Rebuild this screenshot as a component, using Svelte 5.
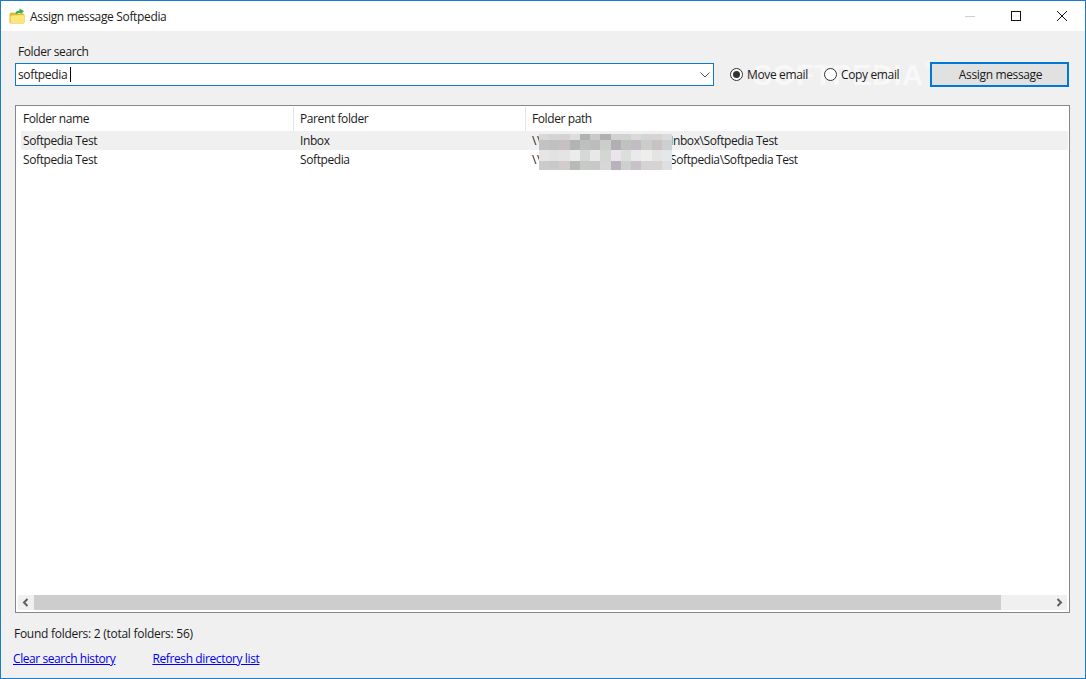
<script>
	const rows = [
		{ name: 'Softpedia Test', parent: 'Inbox', prefix: '\\\\', path: 'Inbox\\Softpedia Test' },
		{ name: 'Softpedia Test', parent: 'Softpedia', prefix: '\\\\', path: 'Softpedia\\Softpedia Test' }
	];

	// censored part of the folder path, one list per band
	const blur = [
		['#d8d8d8', '#d4d4d4', '#d6d2d4', '#e0dcda', '#aeb2b2', '#c8cac8', '#b0b0b0', '#d2d2d0', '#d0d2d2', '#dcdad8', '#d4d4d4', '#d8d4d4', '#d8dcdc'],
		['#c2c2c2', '#c0c0c0', '#c6c0c2', '#b2b4b4', '#bec0be', '#bcbcbc', '#cccecc', '#b2aeb4', '#c0c2c0', '#c2bcc4', '#cccccc', '#c8c2c2', '#ccd0d2'],
		['#e6e6e6', '#e2e2e2', '#e4e4e4', '#ececec', '#d4d8d6', '#e8e8e8', '#d4d6d4', '#e8e6e8', '#dcdedc', '#eaeaec', '#eeeeec', '#e4e4e4', '#e4e8ea'],
		['#cbcbcb', '#c9c9c9', '#d2cccd', '#b8bab8', '#c8cac8', '#c8c8c8', '#d6d8d6', '#b8b2bc', '#ccd0ce', '#c8c2c8', '#d4d4d4', '#d8d2d2', '#dce0e2']
	];
</script>

<div class="window">
	<header class="titlebar">
		<svg class="app-icon" width="16" height="16" viewBox="0 0 16 16">
			<path d="M6 6 C6.5 3.5 8.5 2.5 10.5 2.5 L10.5 0.5 L15 3 L11.5 6.5 L11.5 5 C9.5 5 8 5.5 7.5 7 Z" fill="#3fb04a" />
			<path d="M0.5 6.5 Q0.5 4.5 2.5 4.5 L5 4.5 L6.5 6 L14 5.5 Q15.5 5.5 15.5 7 L15.5 14 Q15.5 15.5 14 15.5 L2 15.5 Q0.5 15.5 0.5 14 Z" fill="#e3b92f" />
			<path d="M1.5 8.5 Q1.5 7.5 2.5 7.5 L14 7 Q15 7 15 8 L15 14 Q15 15 14 15 L2.5 15 Q1.5 15 1.5 14 Z" fill="#fbe77a" />
		</svg>
		<span class="title">Assign message Softpedia</span>
		<div class="controls">
			<span class="ctl"><svg width="12" height="12" viewBox="0 0 12 12"><path d="M1 6.5 H11" stroke="#cfcfcf" /></svg></span>
			<span class="ctl"><svg width="12" height="12" viewBox="0 0 12 12"><rect x="1.5" y="1.5" width="9" height="9" fill="none" stroke="#111" /></svg></span>
			<span class="ctl"><svg width="12" height="12" viewBox="0 0 12 12"><path d="M1 1 L11 11 M11 1 L1 11" stroke="#111" /></svg></span>
		</div>
	</header>

	<main class="content">
		<label class="search-label" for="search">Folder search</label>
		<div class="search-row">
			<span class="watermark">SOFTPEDIA<sup>®</sup></span>
			<div class="combo">
				<span id="search" class="combo-text">softpedia</span>
				<span class="caret"></span>
				<svg class="chevron" width="10" height="6" viewBox="0 0 10 6"><path d="M0.5 0.5 L5 5 L9.5 0.5" fill="none" stroke="#555" /></svg>
			</div>
			<div class="radio-item">
				<span class="radio checked"></span>
				<span>Move email</span>
			</div>
			<div class="radio-item">
				<span class="radio"></span>
				<span>Copy email</span>
			</div>
			<button type="button" class="assign">Assign message</button>
		</div>

		<section class="list">
			<div class="list-head">
				<div class="col col-name">Folder name</div>
				<div class="col col-parent">Parent folder</div>
				<div class="col col-path">Folder path</div>
			</div>
			<div class="list-body">
				{#each rows as row, i}
					<div class="row" class:alt={i === 0}>
						<div class="col col-name">{row.name}</div>
						<div class="col col-parent">{row.parent}</div>
						<div class="col col-path">
							<span class="prefix">{row.prefix}</span><span class="redact"></span>{row.path}
						</div>
					</div>
				{/each}
				<div class="mosaic">
					{#each blur as band, b}
						<div class="band band-{b}">
							{#each band as c}
								<span style="background:{c}"></span>
							{/each}
						</div>
					{/each}
				</div>
			</div>
			<div class="hscroll">
				<svg width="16" height="15" viewBox="0 0 16 15"><path d="M9.5 4 L6 7.5 L9.5 11" fill="none" stroke="#606060" stroke-width="2" /></svg>
				<div class="track"><div class="thumb"></div></div>
				<svg width="16" height="15" viewBox="0 0 16 15"><path d="M6.5 4 L10 7.5 L6.5 11" fill="none" stroke="#606060" stroke-width="2" /></svg>
			</div>
		</section>

		<div class="found">Found folders: 2 (total folders: 56)</div>
		<div class="links">
			<a href="#clear">Clear search history</a>
			<a href="#refresh">Refresh directory list</a>
		</div>
	</main>
</div>

<style>
	:global(body) {
		margin: 0;
		background: #f0f0f0;
	}

	.window {
		box-sizing: border-box;
		width: 1086px;
		height: 679px;
		border: 1px solid #1a7ccb;
		display: flex;
		flex-direction: column;
		font-family: "Open Sans", "Noto Sans", sans-serif;
		font-size: 12px;
		color: #1a1a1a;
		background: #f0f0f0;
		overflow: hidden;
	}

	.titlebar {
		height: 30px;
		flex: none;
		background: #fff;
		display: flex;
		align-items: center;
		padding-left: 8px;
	}

	.app-icon {
		margin-right: 5px;
		margin-top: -1px;
	}

	.title {
		letter-spacing: -0.34px;
	}

	.controls {
		margin-left: auto;
		display: flex;
	}

	.ctl {
		width: 46px;
		height: 30px;
		display: flex;
		align-items: center;
		justify-content: center;
	}

	.content {
		flex: 1;
		display: flex;
		flex-direction: column;
		padding: 13px 15px 0 14px;
		min-height: 0;
	}

	.search-label {
		margin-left: 3px;
		height: 18px;
		line-height: 15px;
		letter-spacing: -0.4px;
	}

	.search-row {
		position: relative;
		display: flex;
		align-items: center;
		height: 25px;
	}

	.combo {
		box-sizing: border-box;
		width: 699px;
		height: 23px;
		background: #fff;
		border: 1px solid #0f78d2;
		display: flex;
		align-items: center;
		padding-left: 2px;
		position: relative;
	}

	.combo-text {
		letter-spacing: -0.35px;
	}

	.caret {
		width: 1px;
		height: 15px;
		background: #000;
		margin-left: 3px;
	}

	.chevron {
		position: absolute;
		right: 3px;
		top: 8px;
	}

	.radio-item {
		position: relative;
		display: flex;
		align-items: center;
		gap: 4px;
		letter-spacing: -0.35px;
		margin-left: 16px;
	}

	.radio {
		box-sizing: border-box;
		width: 13px;
		height: 13px;
		border: 1px solid #333;
		border-radius: 50%;
		background: #fff;
		position: relative;
	}

	.radio.checked::after {
		content: '';
		position: absolute;
		left: 2px;
		top: 2px;
		width: 7px;
		height: 7px;
		border-radius: 50%;
		background: #333;
	}

	.assign {
		position: relative;
		box-sizing: border-box;
		margin-left: auto;
		margin-right: 1px;
		width: 139px;
		height: 25px;
		padding: 0 0 0 2px;
		border: 2px solid #0078d7;
		background: #e1e1e1;
		font: inherit;
		color: inherit;
		letter-spacing: -0.35px;
	}

	.watermark {
		position: absolute;
		left: 738px;
		top: 0;
		font-family: "Liberation Sans", sans-serif;
		font-weight: 700;
		font-size: 29px;
		line-height: 26px;
		letter-spacing: 0.5px;
		color: rgba(255, 255, 255, 0.6);
		pointer-events: none;
	}

	.watermark sup {
		position: absolute;
		top: -9px;
		right: -7px;
		font-size: 8px;
		letter-spacing: 0;
	}

	.list {
		box-sizing: border-box;
		margin-top: 18px;
		height: 508px;
		flex: none;
		background: #fff;
		border: 1px solid #828790;
		display: flex;
		flex-direction: column;
		padding: 0 1px 2px 2px;
	}

	.list-head {
		display: flex;
		height: 25px;
		flex: none;
		align-items: flex-end;
		padding-left: 3px;
	}

	.list-head .col {
		height: 24px;
		line-height: 23px;
		border-right: 1px solid #e5e5e5;
	}

	.list-head .col-path {
		border-right: none;
	}

	.col {
		box-sizing: border-box;
		white-space: nowrap;
		letter-spacing: -0.4px;
	}

	.col-name {
		width: 273px;
		padding-left: 2px;
	}

	.col-parent {
		width: 232px;
		padding-left: 6px;
	}

	.col-path {
		flex: 1;
		padding-left: 6px;
	}

	.list-body {
		flex: 1;
		position: relative;
		min-height: 0;
	}

	.row {
		display: flex;
		height: 19px;
		line-height: 19px;
		margin-left: 3px;
	}

	.row.alt {
		background: #f0f0f0;
	}

	.prefix {
		display: inline-block;
		width: 7px;
		letter-spacing: 0.5px;
	}

	.redact {
		display: inline-block;
		width: 131px;
	}

	.mosaic {
		position: absolute;
		left: 521px;
		top: 3px;
		width: 133px;
		display: flex;
		flex-direction: column;
	}

	.band {
		display: grid;
		grid-template-columns: repeat(13, 1fr);
	}

	.band-0 { height: 6px; }
	.band-1 { height: 10px; }
	.band-2 { height: 11px; }
	.band-3 { height: 9px; }

	.hscroll {
		flex: none;
		height: 15px;
		margin-right: 1px;
		display: flex;
		background: #f0f0f0;
	}

	.track {
		flex: 1;
	}

	.thumb {
		width: 967px;
		height: 15px;
		background: #cdcdcd;
	}

	.found {
		margin-top: 12px;
		margin-left: -1px;
		line-height: 17px;
		letter-spacing: -0.27px;
	}

	.links {
		margin-top: 8px;
		margin-left: -2px;
		display: flex;
		gap: 37px;
		line-height: 17px;
		letter-spacing: -0.42px;
	}

	.links a {
		color: #0000ee;
	}

	.links a + a {
		letter-spacing: -0.38px;
	}
</style>
